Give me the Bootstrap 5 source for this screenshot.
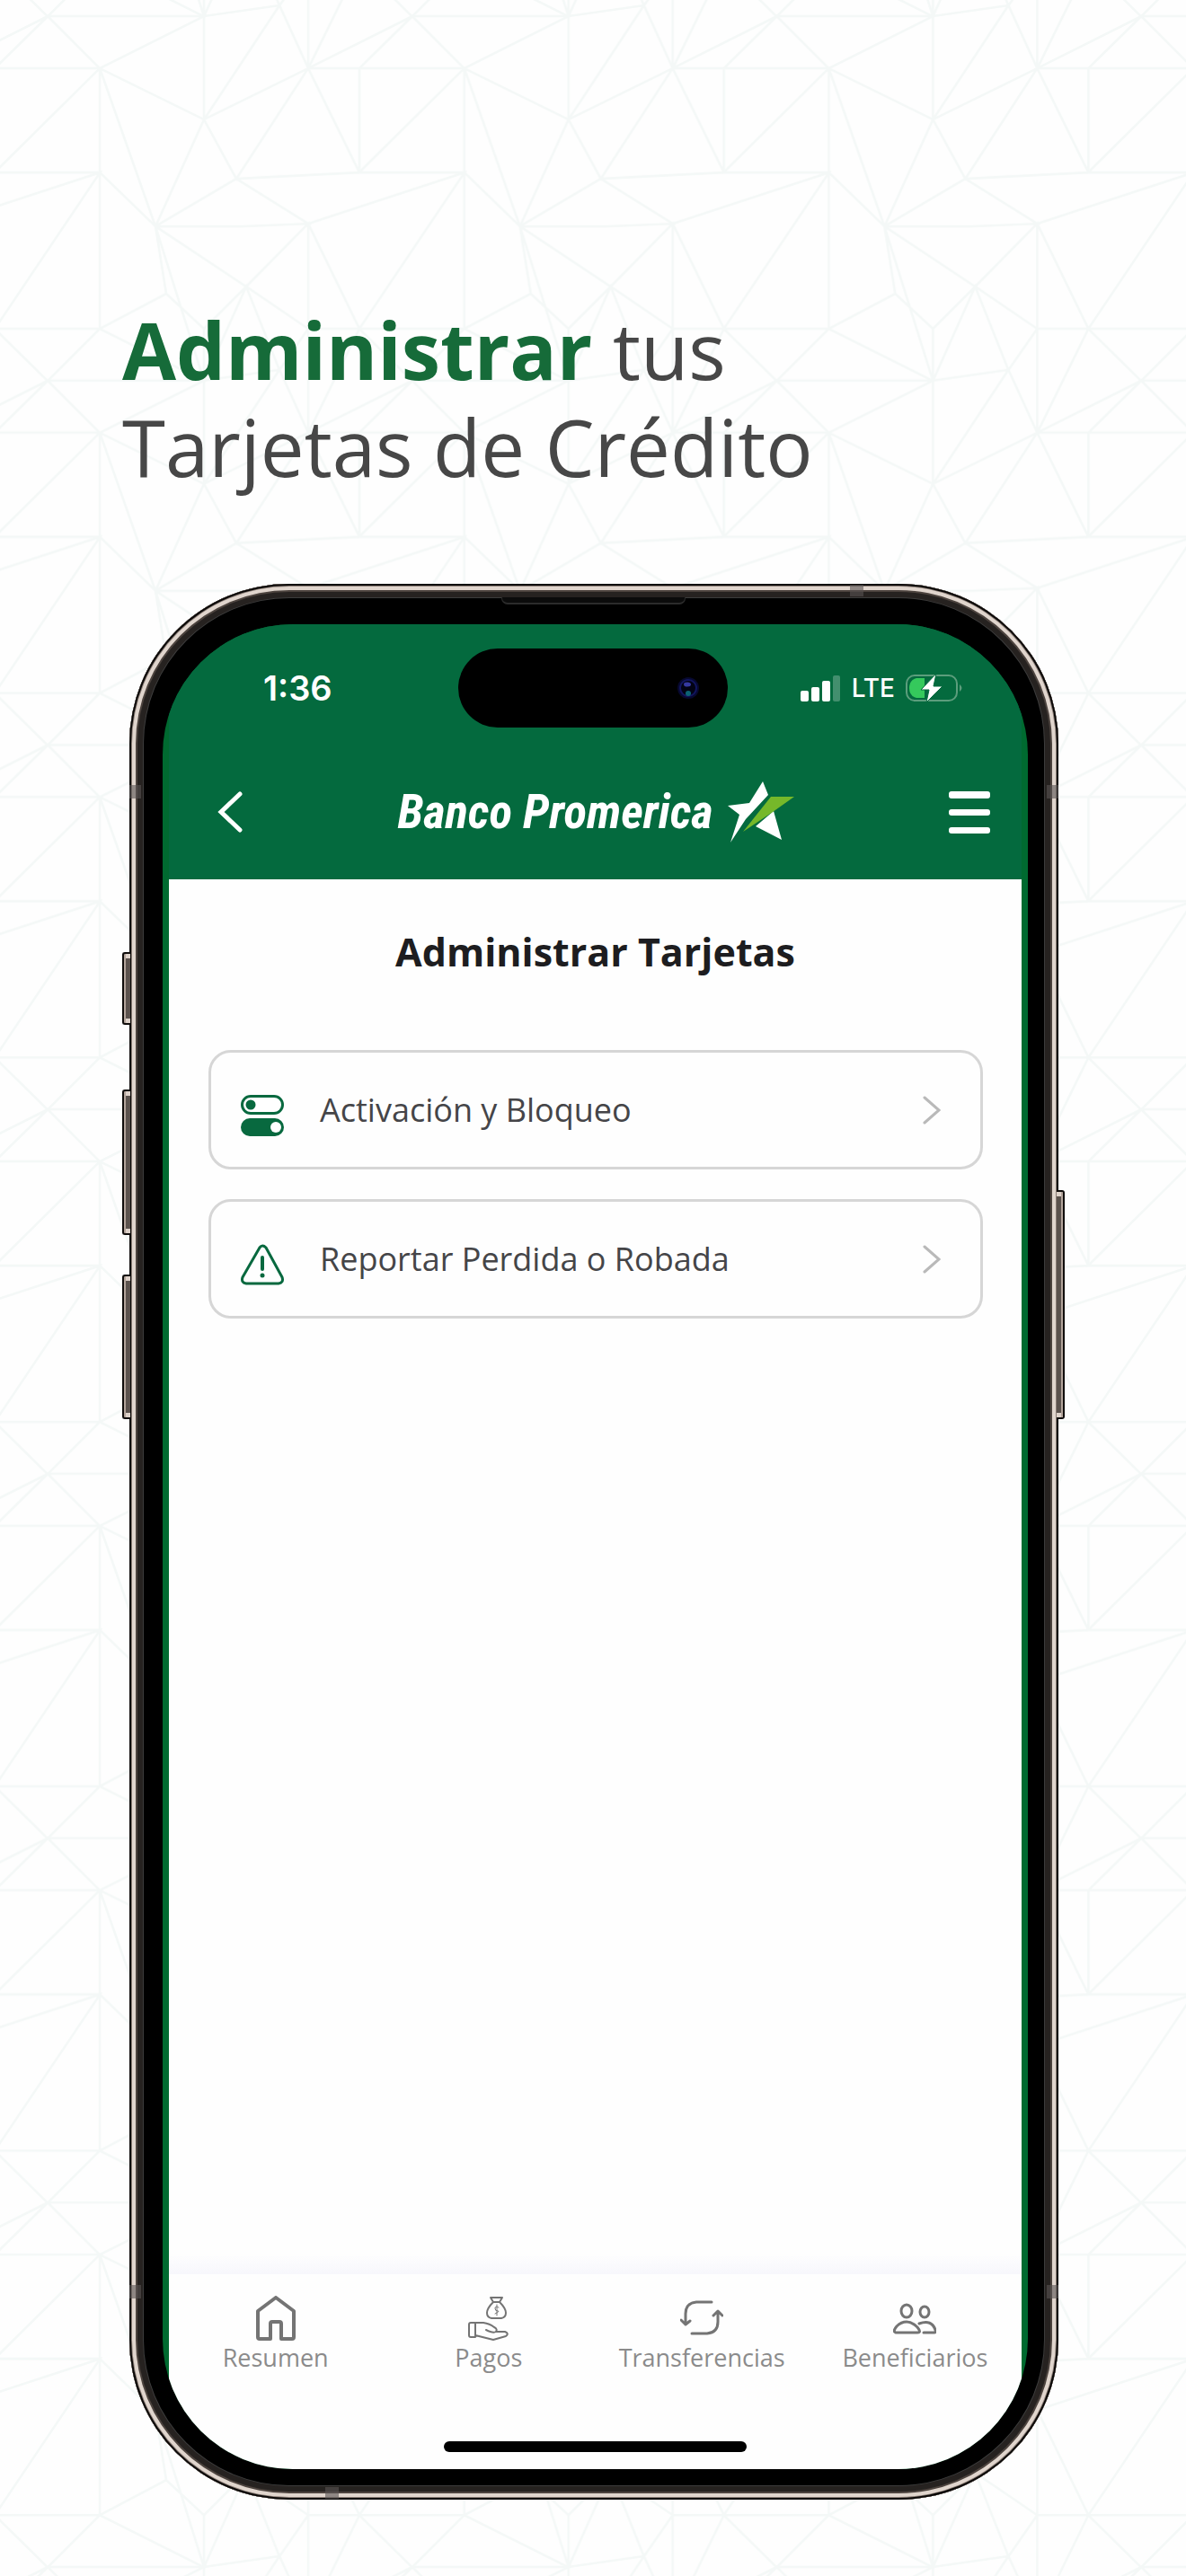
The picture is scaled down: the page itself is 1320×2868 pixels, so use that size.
<!DOCTYPE html>
<html lang="es">
<head>
<meta charset="utf-8">
<meta name="viewport" content="width=device-width, initial-scale=1">
<title>Administrar tus Tarjetas de Crédito</title>
<link rel="stylesheet" href="https://cdn.jsdelivr.net/npm/bootstrap@5.3.0/dist/css/bootstrap.min.css">
<style>
body{font-family:"Open Sans","Noto Sans",sans-serif;background:#fefefe;color:#474747}
.mesh{position:absolute;inset:0;width:100%;height:100%;z-index:-1}
.promo{padding:335px 136px 99px;font-size:87px;line-height:108px;font-weight:400;margin:0}
.promo strong{color:#166b39;font-weight:700}
.phone{margin:0 142px 85px 144px;padding:45px 34px 34px 37px;border-radius:178px;background:#000;
 box-shadow:inset 0 0 0 2px #0b0908,inset 0 0 0 3px #8a7d76,inset 0 0 0 7px #e0d5cd,inset 0 0 0 9px #4c433e,inset 0 0 0 15px #262220,inset 0 0 0 16px #3c3c3c}
.display-area{background:#006a30;border-radius:145px;padding:0 7px;overflow:hidden}
.topbar{background:#046a3e}
.status-row{display:grid;grid-template-columns:1fr 300px 1fr;padding:27px 5px 0 0;color:#fff}
.island{height:88px;border-radius:44px;background:#000;padding-right:31px}
.clock{font:600 38px/44px Inter,sans-serif;padding-left:105px}
.net{font:500 28px/40px Inter,sans-serif;margin:0 12px}
.status-icons{padding-right:60px}
.brand-row{padding:60px 35px 41px 54px}
.brand-row button,.brand-row svg{display:block}
.wordmark{font:italic 700 53px/68px "Liberation Sans Narrow","Roboto Condensed","DejaVu Sans Condensed",sans-serif;color:#fff}
.content{background:#fefefe}
.page-title{font-size:43px;line-height:56px;font-weight:700;color:#1d1d20;padding:53px 0 81px;margin:0}
.option{border:3px solid #d6d6d6;border-radius:25px;height:133px;padding:0 44px 0 33px;color:#454548;font-size:36px;background:#fefefe}
.option .lead-icon{margin:12px 40px 0 0}
.options{padding:0 43px 0 44px;gap:33px}
.tabs-shade{height:20px;background:linear-gradient(#fdfdfe,#f7f7fc)}
.tabs-row{background:#fefefe;padding-top:24px}
.tabs-row a{color:#8b8b8b;font-size:27px;line-height:38px}
.tabs-row svg{display:block;margin:0 auto;stroke:#747474;fill:none;stroke-width:3;stroke-linecap:round;stroke-linejoin:round}
.home-zone{background:#fefefe;padding:74px 0 19px}
.home-bar{width:337px;height:12px;border-radius:6px;background:#000}
.side-key{position:absolute;width:9px;background:#5b524d;border:2px solid #100d0c;box-shadow:inset 2px 0 #b3a49b,inset 0 5px #ddd1c9,inset 0 -5px #ddd1c9}
.key-l{left:-8px;border-right:0;border-radius:3px 0 0 3px}
.key-r{right:-7px;border-left:0;border-radius:0 3px 3px 0;box-shadow:inset -2px 0 #b3a49b,inset 0 5px #ddd1c9,inset 0 -5px #ddd1c9}
.band{position:absolute;background:#59545499}
.band-v{width:13px;height:15px}.band-h{width:15px;height:13px}
.earpiece{position:absolute;top:15px;left:50%;width:205px;height:8px;margin-left:-103px;background:#0b0b0b;border:solid #2b2b2b;border-width:0 1px 2px;border-radius:0 0 7px 7px}
</style>
</head>
<body class="position-relative d-flex flex-column min-vh-100">
<svg class="mesh" aria-hidden="true">
 <defs>
  <path id="p" fill="none" stroke="#f4f8f7" stroke-width="2.600" d="M53 18H227L311 6M53 18L111 76L227 18V133L311 6L343 76L459 18L400 76M343 76H517M111 76L227 133L343 76M111 76V366M111 76L173 252L227 133L263 199L343 76L400 192V76M111 76L-6 192H111L173 252L263 199L400 192M263 199L343 249L269 252H173M343 249L517 192L400 366M173 252L274 319L343 249V482M343 249L400 366L343 482M173 252L185 327L111 366L53 424L-6 366H111L227 424V366L185 327M173 252L227 424L274 319L311 412L343 366L274 319L227 366M343 366H400"/>
  <pattern id="net" width="405.700" height="405.700" patternUnits="userSpaceOnUse">
   <use href="#p"/><use href="#p" x="-405.700"/><use href="#p" x="405.700"/><use href="#p" y="-405.700"/><use href="#p" x="-405.700" y="-405.700"/><use href="#p" x="405.700" y="-405.700"/>
  </pattern>
 </defs>
 <rect width="100%" height="100%" fill="url(#net)"/>
</svg>

<h1 class="promo"><strong>Administrar</strong> tus<br>Tarjetas de Crédito</h1>

<main class="phone position-relative flex-grow-1 d-flex flex-column">
 <i class="side-key key-l" style="top:410px;height:81px"></i>
 <i class="side-key key-l" style="top:563px;height:162px"></i>
 <i class="side-key key-l" style="top:769px;height:161px"></i>
 <i class="side-key key-r" style="top:675px;height:255px"></i>
 <i class="band band-v" style="left:0;top:224px"></i><i class="band band-v" style="right:0;top:224px"></i>
 <i class="band band-v" style="left:0;bottom:224px"></i><i class="band band-v" style="right:0;bottom:224px"></i>
 <i class="band band-h" style="right:217px;top:1px"></i><i class="band band-h" style="left:218px;bottom:1px"></i>
 <span class="earpiece"></span>

 <div class="display-area flex-grow-1 d-flex flex-column">
  <header class="topbar">
   <div class="status-row align-items-center">
    <span class="clock">1:36</span>
    <div class="island d-flex align-items-center justify-content-end">
     <svg width="26" height="26" viewBox="0 0 26 26" aria-hidden="true"><circle cx="13" cy="13" r="12" fill="#07082e"/><circle cx="13" cy="13" r="9" fill="#020314" stroke="#11155e" stroke-width="2"/><ellipse cx="12" cy="9" rx="4" ry="2.500" fill="#3539a0"/><circle cx="13" cy="19" r="3" fill="#0c6274"/></svg>
    </div>
    <div class="status-icons d-flex align-items-center justify-content-end">
     <svg width="45" height="29" viewBox="0 0 45 29" fill="#fff" aria-label="Señal"><rect y="17" width="9" height="12" rx="2"/><rect x="12" y="13" width="9" height="16" rx="2"/><rect x="24" y="6" width="9" height="23" rx="2"/><rect x="36" width="8" height="29" rx="2" opacity=".25"/></svg>
     <span class="net">LTE</span>
     <svg width="64" height="32" viewBox="0 0 64 32" aria-label="Batería"><rect x="1" y="2" width="56" height="28" rx="9" fill="none" stroke="#5c9d7c" stroke-width="2"/><path d="M60 12q5 4 0 8z" fill="#5c9d7c"/><path d="M12 5H21V27H12Q4 25 4 16T12 5z" fill="#35c95c"/><path d="M34 0L17 18H26L23 32L41 14H31z" fill="#fff" stroke="#046a3e"/></svg>
    </div>
   </div>
   <div class="brand-row d-flex align-items-center justify-content-between">
    <button type="button" class="btn p-0 border-0" aria-label="Volver"><svg width="28" height="48" viewBox="0 0 28 48" fill="none" stroke="#fff" stroke-width="5" stroke-linecap="round"><path d="M25 4L4 24L25 44"/></svg></button>
    <div class="d-flex align-items-center gap-3"><span class="wordmark">Banco Promerica</span>
     <svg width="74" height="68" viewBox="0 0 74 68" aria-hidden="true"><path fill="#fff" d="M39 0L45 15L20 42L3 68L13 37L0 27L24 24zM51 33L60 65L31 50z"/><path fill="#76b82a" d="M48 17L74 17L50 34L17 56z"/></svg>
    </div>
    <button type="button" class="btn p-0 border-0" aria-label="Menú"><svg width="46" height="47" viewBox="0 0 46 47" fill="#fff"><rect width="46" height="8" rx="3"/><rect y="20" width="46" height="7" rx="3"/><rect y="40" width="46" height="7" rx="3"/></svg></button>
   </div>
  </header>

  <section class="content flex-grow-1">
   <h2 class="page-title text-center">Administrar Tarjetas</h2>
   <div class="options d-flex flex-column">
    <a href="#" class="option d-flex align-items-center text-decoration-none">
     <svg class="lead-icon" width="48" height="46" viewBox="0 0 48 46" aria-hidden="true"><rect x="1.500" y="1.500" width="45" height="19" rx="9.500" fill="#fff" stroke="#08693f" stroke-width="3"/><circle cx="11" cy="11" r="5.500" fill="#08693f"/><rect y="26" width="48" height="20" rx="10" fill="#08693f"/><circle cx="39" cy="36" r="6" fill="#fff"/></svg>
     <span class="flex-grow-1">Activación y Bloqueo</span>
     <svg width="20" height="32" viewBox="0 0 20 32" fill="none" stroke="#b9b9b9" stroke-width="3" stroke-linecap="round"><path d="M2 2L18 16L2 30"/></svg>
    </a>
    <a href="#" class="option d-flex align-items-center text-decoration-none">
     <svg class="lead-icon" width="48" height="46" viewBox="0 0 48 46" fill="none" stroke="#08693f" stroke-width="3" aria-hidden="true"><path stroke-linejoin="round" d="M21 4Q24 0 28 4L46 37Q48 43 42 44H6Q0 43 2 37z"/><path stroke-linecap="round" stroke-width="4" d="M24 15V28"/><circle cx="24" cy="35" r="2.500" fill="#08693f" stroke="none"/></svg>
     <span class="flex-grow-1">Reportar Perdida o Robada</span>
     <svg width="20" height="32" viewBox="0 0 20 32" fill="none" stroke="#b9b9b9" stroke-width="3" stroke-linecap="round"><path d="M2 2L18 16L2 30"/></svg>
    </a>
   </div>
  </section>

  <div class="tabs-shade"></div>
  <nav class="tabs-row row g-0 text-center">
   <a href="#" class="col text-decoration-none"><svg width="48" height="50" viewBox="0 0 48 50" style="stroke-width:4"><path d="M24 2L44 17V46Q44 48 42 48H30V31Q30 29 28 29H20Q18 29 18 31V48H6Q4 48 4 46V17z"/></svg><div>Resumen</div></a>
   <a href="#" class="col text-decoration-none"><svg width="48" height="50" viewBox="0 0 48 50" style="stroke-width:2"><path d="M26 2H39L36 7Q43 14 43 19Q43 24 38 25H27Q22 24 22 19Q22 14 29 7zM29 7H36"/><path stroke-width="1" d="M35 13Q31 11 31 14T34 17T31 20M33 10V22"/><path d="M4 30H9V46H4Q2 46 2 44V32Q2 30 4 30zM9 30H18Q25 31 30 35Q34 37 32 40Q29 42 21 38M33 40L42 40Q47 42 43 45L29 49L9 44"/></svg><div>Pagos</div></a>
   <a href="#" class="col text-decoration-none"><svg width="48" height="50" viewBox="0 0 48 50"><path d="M35 7H18Q6 8 6 20V32M1 27L6 32L11 28M13 42H30Q42 41 42 29V18M37 22L42 17L47 22"/></svg><div>Transferencias</div></a>
   <a href="#" class="col text-decoration-none"><svg width="48" height="50" viewBox="0 0 48 50"><ellipse cx="15" cy="17" rx="6" ry="7"/><ellipse cx="35" cy="18" rx="5" ry="6"/><path d="M3 41Q-1 40 4 34Q9 29 15 29T27 35Q32 41 27 41zM29 31Q43 26 47 38Q48 41 46 41H34"/></svg><div>Beneficiarios</div></a>
  </nav>
  <div class="home-zone"><div class="home-bar mx-auto"></div></div>
 </div>
</main>
<script src="https://cdn.jsdelivr.net/npm/bootstrap@5.3.0/dist/js/bootstrap.bundle.min.js"></script>
</body>
</html>
